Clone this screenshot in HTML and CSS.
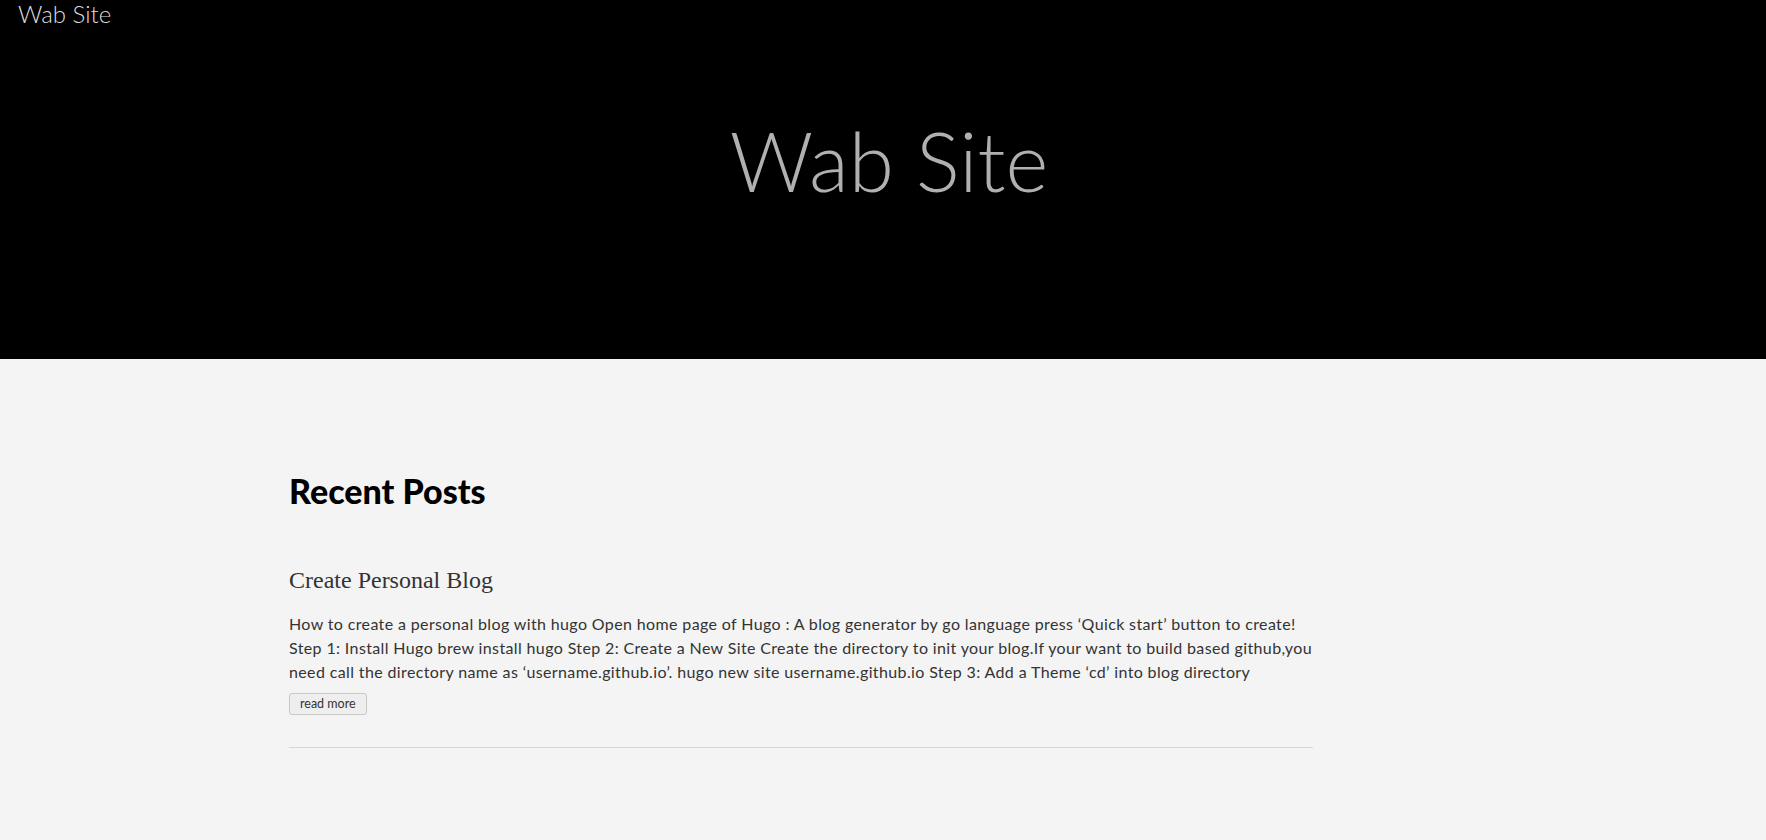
FILE: index.html
```html
<!DOCTYPE html>
<html lang="en">
<head>
<meta charset="utf-8">
<title>Wab Site</title>
<link rel="stylesheet" href="styles.css">
</head>
<body>
<header class="hero">
  <a class="brand" href="#">Wab Site</a>
  <h1 class="hero-title">Wab Site</h1>
</header>
<main class="content">
  <h2 class="section-title">Recent Posts</h2>
  <article class="post">
    <h3 class="post-title">Create Personal Blog</h3>
    <p class="post-summary">How to create a personal blog with hugo Open home page of Hugo : A blog generator by go language press ‘Quick start’ button to create! Step 1: Install Hugo brew install hugo Step 2: Create a New Site Create the directory to init your blog.If your want to build based github,you need call the directory name as ‘username.github.io’. hugo new site username.github.io Step 3: Add a Theme ‘cd’ into blog directory</p>
    <button class="read-more" type="button">read more</button>
  </article>
</main>
</body>
</html>
```
FILE: styles.css
```css
html, body {
  margin: 0;
  padding: 0;
}
body {
  background: #f4f4f4;
  font-family: Lato, "Open Sans", sans-serif;
  color: #333;
}
.hero {
  background: #000;
  height: 359px;
  display: flex;
  flex-direction: column;
  box-sizing: border-box;
}
.brand {
  align-self: flex-start;
  margin-left: 18px;
  font-size: 24px;
  font-weight: 300;
  line-height: 28px;
  color: #dcdcdc;
  text-decoration: none;
}
.hero-title {
  margin: 84px 0 0 0;
  text-align: center;
  font-size: 82px;
  font-weight: 300;
  line-height: 96px;
  color: #b0b0b0;
  padding-left: 12px;
}
.content {
  margin-left: 289px;
  width: 1024px;
  padding-top: 112px;
}
.section-title {
  margin: 0;
  font-size: 34px;
  font-weight: 900;
  line-height: 40px;
  color: #000;
}
.post {
  margin-top: 53px;
  padding-bottom: 32px;
  border-bottom: 1px solid #d6d6d6;
}
.post-title {
  margin: 0;
  font-family: "Liberation Serif", serif;
  font-weight: 400;
  font-size: 24px;
  line-height: 32px;
  color: #333;
}
.post-summary {
  margin: 16px 0 8px 0;
  font-size: 16px;
  letter-spacing: 0.37px;
  line-height: 24px;
  color: #333;
}
.read-more {
  font-family: Lato, sans-serif;
  font-size: 12.5px;
  color: #333;
  background: #eee;
  border: 1px solid #c8c8c8;
  border-radius: 3px;
  height: 22px;
  padding: 0 10px;
  line-height: 20px;
}
```
